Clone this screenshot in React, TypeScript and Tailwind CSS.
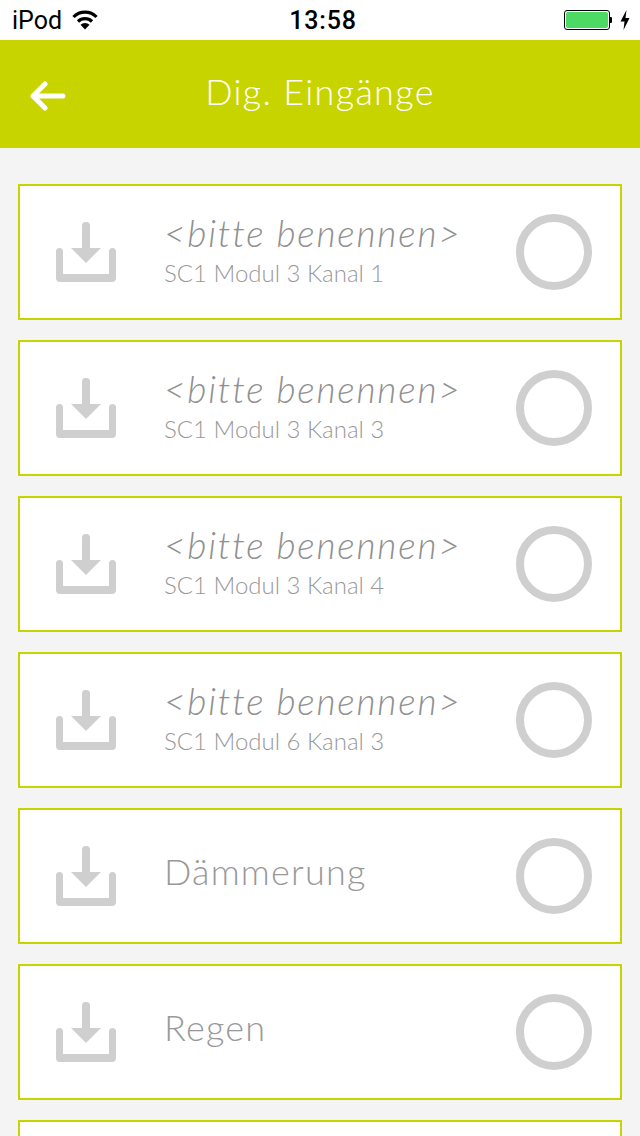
const SANS = "font-['Lato','Noto_Sans',sans-serif]";

interface Input {
  name: string;
  channel?: string;
}

const inputs: Input[] = [
  { name: "<bitte benennen>", channel: "SC1 Modul 3 Kanal 1" },
  { name: "<bitte benennen>", channel: "SC1 Modul 3 Kanal 3" },
  { name: "<bitte benennen>", channel: "SC1 Modul 3 Kanal 4" },
  { name: "<bitte benennen>", channel: "SC1 Modul 6 Kanal 3" },
  { name: "Dämmerung" },
  { name: "Regen" },
  { name: "" },
];

function InputIcon() {
  return (
    <svg width="60" height="60" viewBox="0 0 60 60" className="shrink-0" fill="#cfcfcf">
      <rect x="26" y="0" width="8" height="30" rx="3.500" />
      <path d="M15 26 H45 L30 41 Z" />
      <path d="M3.500 26 A3.500 3.500 0 0 1 7 29.500 V52 H53 V29.500 A3.500 3.500 0 0 1 60 29.500 V56 A4 4 0 0 1 56 60 H4 A4 4 0 0 1 0 56 V29.500 A3.500 3.500 0 0 1 3.500 26 Z" />
    </svg>
  );
}

function InputRow({ input }: { input: Input }) {
  const placeholder = input.name.startsWith("<");
  return (
    <div className="flex h-[136px] shrink-0 items-center border-2 border-[#c8d400] bg-white pl-[36px] pr-[28px]">
      <InputIcon />
      <div className={input.channel ? "ml-[48px] flex-1 pb-[3px]" : "ml-[48px] flex-1 pb-[10px]"}>
        {input.name && (
          <div
            className={
              placeholder
                ? "-mt-[1px] text-[37px] leading-[40px] font-light tracking-[1.8px] text-[#909090] italic"
                : "text-[36px] leading-[40px] font-light tracking-[1.2px] text-[#999999]"
            }
          >
            {input.name}
          </div>
        )}
        {input.channel && (
          <div className="mt-[5px] text-[24px] leading-[30px] font-light text-[#999999]">
            {input.channel}
          </div>
        )}
      </div>
      {input.name && (
        <div className="h-[76px] w-[76px] shrink-0 rounded-full border-[8px] border-[#cfcfcf]" />
      )}
    </div>
  );
}

export default function App() {
  return (
    <div className={`flex h-[1136px] w-[640px] flex-col overflow-hidden bg-[#f4f4f4] ${SANS}`}>
      <div className="flex h-[40px] shrink-0 items-center justify-between bg-white pr-[10px] pl-[12px] font-['Roboto',sans-serif] text-black">
        <div className="flex w-[200px] items-center gap-[10px] text-[25px]">
          <span className="translate-y-[1px]">iPod</span>
          <svg width="26" height="20" viewBox="0 0 26 20" fill="none" stroke="#000" strokeWidth="3.200">
            <path d="M1.500 7 A16 16 0 0 1 24.500 7" />
            <path d="M6 11.500 A10 10 0 0 1 20 11.500" />
            <path d="M13 19.500 L8.500 14.800 A6.500 6.500 0 0 1 17.500 14.800 Z" fill="#000" stroke="none" />
          </svg>
        </div>
        <div className="translate-x-[2px] translate-y-[1px] text-[25px] font-medium tracking-[0.8px]">13:58</div>
        <div className="flex w-[200px] items-center justify-end gap-[8px]">
          <div className="flex items-center">
            <div className="h-[20px] w-[46px] rounded-[3px] border border-black p-[1px]">
              <div className="h-full w-full rounded-[2px] bg-[#4cd964]" />
            </div>
            <div className="h-[6px] w-[2px] rounded-r-[1px] bg-black" />
          </div>
          <svg width="10" height="20" viewBox="0 0 10 20" fill="#000">
            <path d="M6.500 0 L0.500 11.500 H4.500 L3.500 20 L9.500 8 H5.500 Z" />
          </svg>
        </div>
      </div>

      <div className="relative flex h-[108px] shrink-0 items-center justify-center bg-[#c8d400] text-white">
        <svg
          width="36"
          height="30"
          viewBox="0 0 36 30"
          fill="none"
          stroke="#fff"
          strokeWidth="5"
          strokeLinecap="round"
          strokeLinejoin="round"
          className="absolute top-[41px] left-[30px]"
        >
          <path d="M33 15 H3 M15 3 L3 15 L15 27" />
        </svg>
        <h1 className="-mt-[6px] text-[36px] leading-none font-light tracking-[1.3px]">Dig. Eingänge</h1>
      </div>

      <div className="flex flex-col gap-[20px] pt-[36px] pr-[18px] pl-[18px]">
        {inputs.map((input, i) => (
          <InputRow key={i} input={input} />
        ))}
      </div>
    </div>
  );
}
